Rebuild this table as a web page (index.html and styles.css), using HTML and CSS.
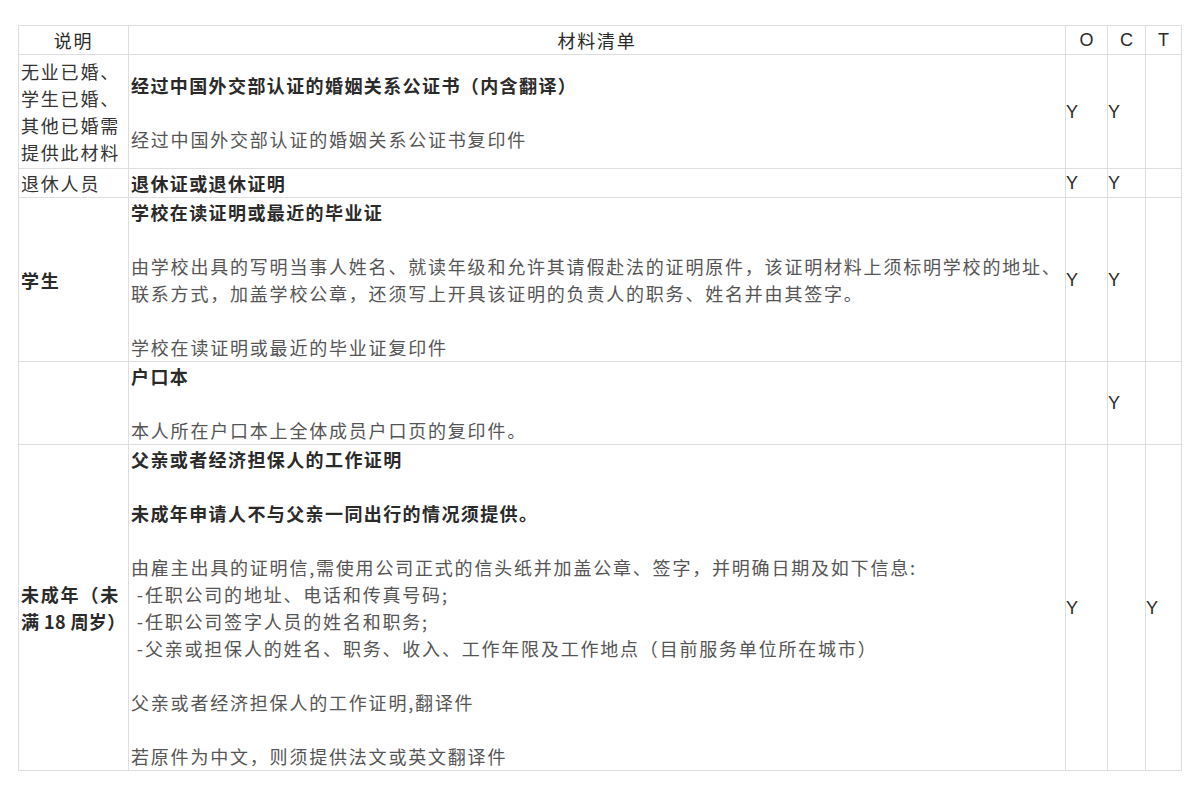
FILE: index.html
```html
<!DOCTYPE html>
<html lang="zh-CN">
<head>
<meta charset="utf-8">
<title>材料清单</title>
<link rel="stylesheet" href="styles.css">
</head>
<body>
<table class="docs">
  <colgroup>
    <col class="c-label">
    <col class="c-main">
    <col class="c-o">
    <col class="c-c">
    <col class="c-t">
  </colgroup>
  <thead>
    <tr>
      <th class="h-cjk">说明</th>
      <th class="h-cjk">材料清单</th>
      <th class="h-lat">O</th>
      <th class="h-lat">C</th>
      <th class="h-lat">T</th>
    </tr>
  </thead>
  <tbody>
    <tr>
      <td class="label tall">无业已婚、学生已婚、其他已婚需提供此材料</td>
      <td class="main">
        <p class="b">经过中国外交部认证的婚姻关系公证书（内含翻译）</p>
        <p class="n">经过中国外交部认证的婚姻关系公证书复印件</p>
      </td>
      <td class="yes">Y</td>
      <td class="yes">Y</td>
      <td class="yes"></td>
    </tr>
    <tr>
      <td class="label">退休人员</td>
      <td class="main">
        <p class="b">退休证或退休证明</p>
      </td>
      <td class="yes">Y</td>
      <td class="yes">Y</td>
      <td class="yes"></td>
    </tr>
    <tr>
      <td class="label bold">学生</td>
      <td class="main">
        <p class="b">学校在读证明或最近的毕业证</p>
        <p class="n">由学校出具的写明当事人姓名、就读年级和允许其请假赴法的证明原件，该证明材料上须标明学校的地址、联系方式，加盖学校公章，还须写上开具该证明的负责人的职务、姓名并由其签字。</p>
        <p class="n">学校在读证明或最近的毕业证复印件</p>
      </td>
      <td class="yes">Y</td>
      <td class="yes">Y</td>
      <td class="yes"></td>
    </tr>
    <tr>
      <td class="label"></td>
      <td class="main">
        <p class="b">户口本</p>
        <p class="n">本人所在户口本上全体成员户口页的复印件。</p>
      </td>
      <td class="yes"></td>
      <td class="yes">Y</td>
      <td class="yes"></td>
    </tr>
    <tr>
      <td class="label bold">未成年（未<br><span class="tight">满 18 周岁）</span></td>
      <td class="main">
        <p class="b">父亲或者经济担保人的工作证明</p>
        <p class="b">未成年申请人不与父亲一同出行的情况须提供。</p>
        <p class="n">由雇主出具的证明信,需使用公司正式的信头纸并加盖公章、签字，并明确日期及如下信息:<br>&nbsp;-任职公司的地址、电话和传真号码;<br>&nbsp;-任职公司签字人员的姓名和职务;<br>&nbsp;-父亲或担保人的姓名、职务、收入、工作年限及工作地点（目前服务单位所在城市）</p>
        <p class="n">父亲或者经济担保人的工作证明,翻译件</p>
        <p class="n">若原件为中文，则须提供法文或英文翻译件</p>
      </td>
      <td class="yes">Y</td>
      <td class="yes"></td>
      <td class="yes">Y</td>
    </tr>
  </tbody>
</table>
</body>
</html>
```

FILE: styles.css
```css
html, body {
  background: #ffffff;
}

body {
  margin: 25px 0 0 18px;
  font-family: "Noto Sans CJK SC", "Noto Sans", sans-serif;
  font-size: 18px;
  color: #333333;
}

.docs {
  border-collapse: collapse;
  width: 1163px;
  table-layout: fixed;
}

.c-label { width: 110px; }
.c-main { width: 937px; }
.c-o { width: 42px; }
.c-c { width: 38px; }
.c-t { width: 36px; }

.docs th,
.docs td {
  border: 1px solid #dedede;
  padding: 1px 2px 0;
  line-height: 27px;
  vertical-align: middle;
}

.docs th {
  font-weight: normal;
  text-align: center;
  color: #2a2a2a;
}

.h-cjk {
  letter-spacing: 1.8px;
}

.h-lat {
  font-family: "Liberation Sans", Arial, sans-serif;
  font-size: 18px;
}

.label {
  letter-spacing: 1.8px;
  color: #333333;
  text-align: left;
}

.label.tall {
  padding-top: 3px;
  padding-bottom: 2px;
}

.label.bold {
  font-weight: bold;
  color: #2a2a2a;
}

.tight {
  white-space: nowrap;
  letter-spacing: 0.4px;
}

.main {
  text-align: left;
}

.main p {
  margin: 0 0 27px 0;
}

.main p:last-child {
  margin-bottom: 0;
}

.b {
  font-weight: bold;
  color: #2a2a2a;
  letter-spacing: 1.4px;
}

.n {
  color: #555555;
  letter-spacing: 1.8px;
}

.yes {
  font-family: "Liberation Sans", Arial, sans-serif;
  font-size: 18px;
  color: #2a2a2a;
  text-align: left;
}

.docs td.yes {
  padding: 1px 0 0;
}
```
